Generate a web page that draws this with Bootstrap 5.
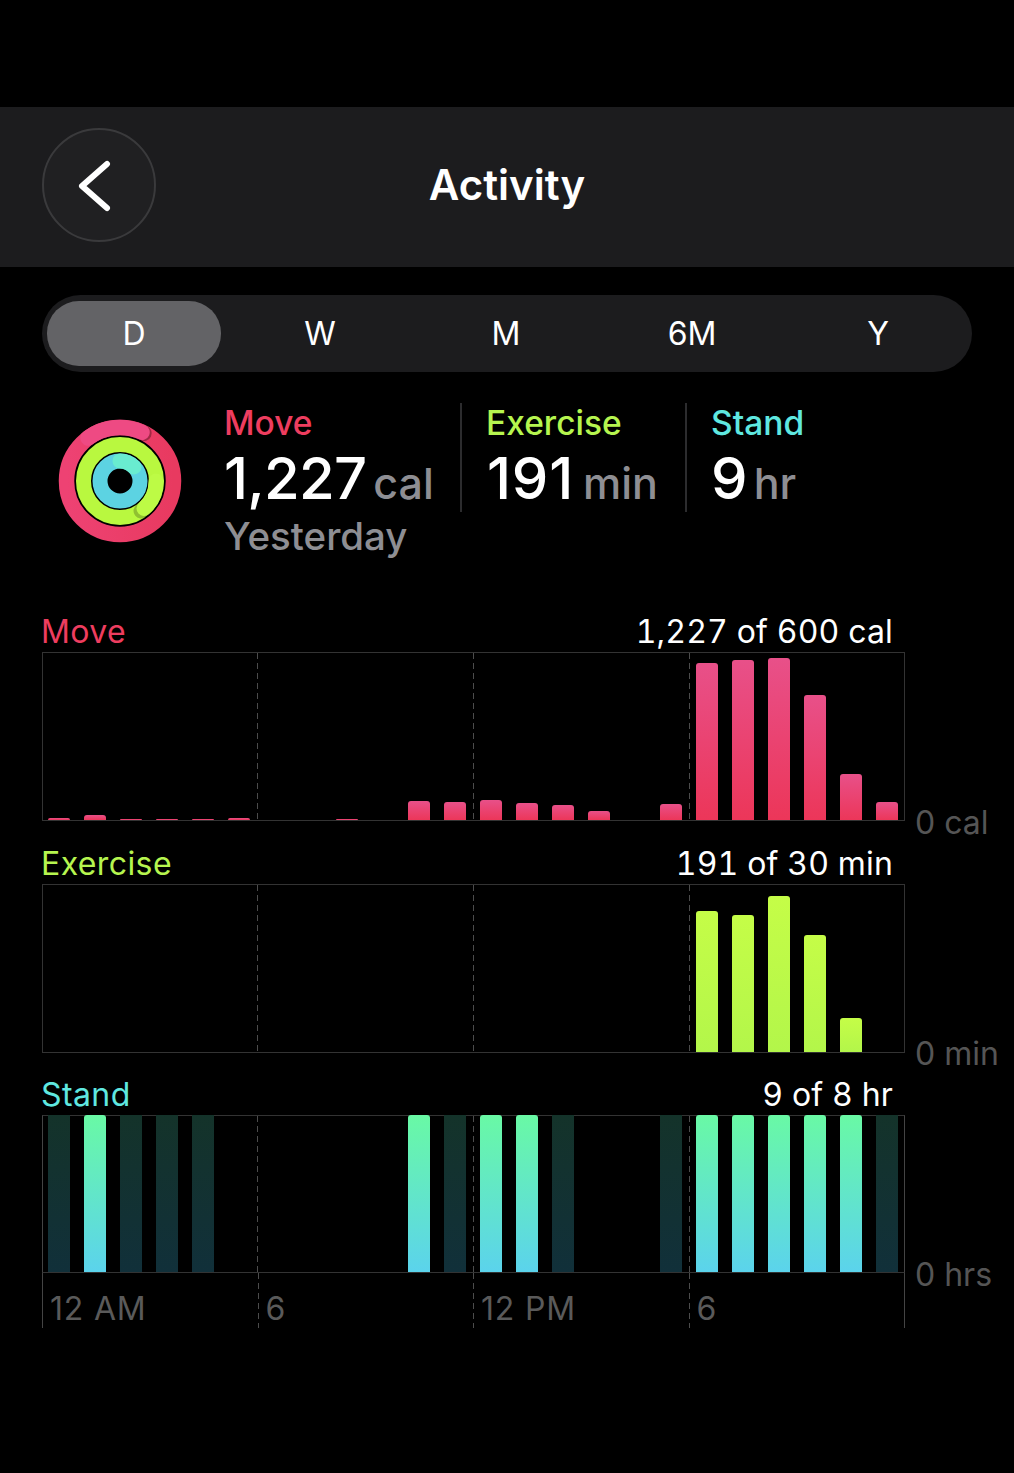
<!DOCTYPE html>
<html lang="en">
<head>
  <meta charset="UTF-8">
  <title>Activity</title>
  <meta name="viewport" content="width=device-width, initial-scale=1.0">
  <link href="https://cdn.jsdelivr.net/npm/bootstrap@5.3.0/dist/css/bootstrap.min.css" rel="stylesheet">
  <style>
    body { background: #000; color: #fff; font-family: Inter, "Liberation Sans", sans-serif; }
    .app-header { margin-top: 107px; height: 160px; background: #1c1c1e; padding: 0 42px; display: grid; grid-template-columns: 1fr auto 1fr; align-items: center; }
    .back-btn { width: 114px; height: 114px; border: 2px solid #3a3a3c; background: #202022; padding: 0; margin-top: -5px; }
    .app-title { font-size: 42px; font-weight: 600; line-height: 1; margin-top: -4px; }

    .range-bar { margin: 28px 42px 0; height: 77px; background: #1c1c1e; }
    .range-item { flex: 0 0 186px; padding: 6px; }
    .range-item:first-child { margin-left: -1px; }
    .range-bar .nav-link { height: 65px; line-height: 65px; padding: 0; color: #fff; font-size: 32px; text-align: center; border-radius: 32px; }
    .range-bar .nav-link.active { background: #636366; color: #fff; }

    .summary { margin: 31px 0 0 58px; }
    .ring-icon { margin-bottom: 3px; }
    .stat-col { margin-left: 42px; }
    .stat { height: 109px; padding-left: 24px; border-left: 2px solid #2c2c2e; }
    .stat:first-child { padding-left: 0; border-left: 0; width: 236px; }
    .stat-ex { width: 225px; }
    .stat-label { font-size: 33.500px; line-height: 40px; font-weight: 500; }
    .stat-value { font-size: 58px; line-height: 71px; font-weight: 500; letter-spacing: -.8px; }
    .stat-unit { font-size: 43px; font-weight: 500; color: #8e8e93; margin-left: 7px; letter-spacing: 0; }
    .stat-wide { letter-spacing: .8px; margin-left: 1px; }
    .stat-wide .stat-unit { margin-left: 9px; }
    .stat-day { font-size: 38.500px; line-height: 49px; font-weight: 500; color: #8e8e93; }
    .c-move { color: #ee3d5f; }
    .c-ex { color: #b6f54f; }
    .c-stand { color: #5fe8e0; }

    .charts { margin: 50px 0 0 42px; }
    .chart-block + .chart-block { margin-top: 22px; }
    .chart-block:last-child { margin-top: 21px; }
    .chart-head { width: 863px; height: 41px; padding-right: 12px; font-size: 32px; line-height: 42px; letter-spacing: .4px; }
    .head-name { margin-left: -1px; }
    .head-val { font-variant-numeric: tabular-nums; letter-spacing: .15px; }
    .plot-row { display: flex; }
    .plot { width: 863px; border: 1px solid #333; padding-left: 5px; gap: 14px; }
    .plot-h168 { height: 169px; }
    .plot-h158 { height: 158px; border-left-color: #444; border-right-color: #444; }
    .guide { top: 0; bottom: 0; width: 1px; background: repeating-linear-gradient(#4c4c4c 0 6px, transparent 6px 10px); }
    .g1 { left: 214px; }
    .g2 { left: 430px; }
    .g3 { left: 646px; }
    .chart-bar { flex: 0 0 22px; position: relative; border-radius: 3px 3px 0 0; }
    .bar-move { background: linear-gradient(#e85089, #ec3659); }
    .bar-ex { background: linear-gradient(#c5fd47, #b3f64a); }
    .bar-on { background: linear-gradient(#69f9a5, #5bd3ec); }
    .bar-off { background: linear-gradient(#14332a, #11303a); border-radius: 0; }
    .axis-unit { align-self: flex-end; margin: 0 0 -22px 10px; font-size: 32px; line-height: 40px; color: #555; white-space: nowrap; }
    .axis-mid { margin-bottom: -21px; }
    .hours { width: 863px; height: 55px; }
    .hour-cell { flex: 1 1 0; border-left: 1px solid transparent; background: repeating-linear-gradient(#4c4c4c 0 6px, transparent 6px 10px) left top / 1px 100% no-repeat border-box; padding: 14px 0 0 7px; font-size: 32px; line-height: 44px; color: #5a5a5a; letter-spacing: .8px; }
    .hour-cell:first-child { border-left-color: #444; background: none; }
    .hour-cell:last-child { border-right: 1px solid #444; }
  </style>
</head>
<body>
  <header class="app-header">
    <div>
      <button class="btn rounded-circle back-btn d-flex align-items-center justify-content-center" aria-label="Back">
        <svg width="42" height="56" viewBox="0 0 42 56" fill="none"><path d="M29 7 4 29l25 22" stroke="#fff" stroke-width="6" stroke-linecap="round" stroke-linejoin="round"/></svg>
      </button>
    </div>
    <div class="app-title">Activity</div>
    <div></div>
  </header>

  <ul class="nav range-bar rounded-pill flex-nowrap">
    <li class="range-item"><a class="nav-link active" href="#">D</a></li>
    <li class="range-item"><a class="nav-link" href="#">W</a></li>
    <li class="range-item"><a class="nav-link" href="#">M</a></li>
    <li class="range-item"><a class="nav-link" href="#">6M</a></li>
    <li class="range-item"><a class="nav-link" href="#">Y</a></li>
  </ul>

  <section class="summary d-flex align-items-center">
    <svg class="ring-icon" width="124" height="124" viewBox="0 0 124 124" fill="none">
      <defs>
        <linearGradient id="ringMove" x1="0" y1="0" x2="1" y2="0"><stop offset="0" stop-color="#ee4273"/><stop offset="1" stop-color="#e83a60"/></linearGradient>
      </defs>
      <circle cx="62" cy="62" r="53.500" stroke="url(#ringMove)" stroke-width="15.500"/>
      <path d="M62 8.500A53.500 53.500 0 0 1 84 13.300" stroke="#000" stroke-opacity=".3" stroke-width="15.500" stroke-linecap="round" transform="translate(2 1)"/>
      <path d="M30 19A53.500 53.500 0 0 1 84 13.300" stroke="#ee4a83" stroke-width="15.500" stroke-linecap="round"/>
      <circle cx="62" cy="62" r="36.500" stroke="#b9f83f" stroke-width="15"/>
      <path d="M98 70A36.500 36.500 0 0 1 85 90" stroke="#000" stroke-opacity=".22" stroke-width="15" stroke-linecap="round" transform="translate(-2 2)"/>
      <path d="M98 62A36.500 36.500 0 0 1 86 89.500" stroke="#bdfb45" stroke-width="15" stroke-linecap="round"/>
      <circle cx="62" cy="62" r="20" stroke="#5cd3e2" stroke-width="15"/>
      <path d="M62 42A20 20 0 0 1 76 48" stroke="#69ecd0" stroke-width="15" stroke-linecap="round"/>
    </svg>
    <div class="stat-col">
      <div class="d-flex">
        <div class="stat">
          <div class="stat-label c-move">Move</div>
          <div class="stat-value">1,227<span class="stat-unit">cal</span></div>
        </div>
        <div class="stat stat-ex">
          <div class="stat-label c-ex">Exercise</div>
          <div class="stat-value stat-wide">191<span class="stat-unit">min</span></div>
        </div>
        <div class="stat">
          <div class="stat-label c-stand">Stand</div>
          <div class="stat-value">9<span class="stat-unit">hr</span></div>
        </div>
      </div>
      <div class="stat-day">Yesterday</div>
    </div>
  </section>

  <main class="charts">
    <div class="chart-block">
      <div class="chart-head d-flex justify-content-between"><span class="head-name c-move">Move</span><span class="head-val">1,227 of 600 cal</span></div>
      <div class="plot-row">
        <div class="plot plot-h168 d-flex align-items-end position-relative" id="plotMove">
          <span class="guide g1 position-absolute"></span><span class="guide g2 position-absolute"></span><span class="guide g3 position-absolute"></span>
        </div>
        <div class="axis-unit">0 cal</div>
      </div>
    </div>
    <div class="chart-block">
      <div class="chart-head d-flex justify-content-between"><span class="head-name c-ex">Exercise</span><span class="head-val">191 of 30 min</span></div>
      <div class="plot-row">
        <div class="plot plot-h168 d-flex align-items-end position-relative" id="plotExercise">
          <span class="guide g1 position-absolute"></span><span class="guide g2 position-absolute"></span><span class="guide g3 position-absolute"></span>
        </div>
        <div class="axis-unit axis-mid">0 min</div>
      </div>
    </div>
    <div class="chart-block">
      <div class="chart-head d-flex justify-content-between"><span class="head-name c-stand">Stand</span><span class="head-val">9 of 8 hr</span></div>
      <div class="plot-row">
        <div class="plot plot-h158 d-flex align-items-end position-relative" id="plotStand">
          <span class="guide g1 position-absolute"></span><span class="guide g2 position-absolute"></span><span class="guide g3 position-absolute"></span>
        </div>
        <div class="axis-unit">0 hrs</div>
      </div>
      <div class="hours d-flex">
        <div class="hour-cell">12 AM</div>
        <div class="hour-cell">6</div>
        <div class="hour-cell">12 PM</div>
        <div class="hour-cell">6</div>
      </div>
    </div>
  </main>

  <script src="https://cdn.jsdelivr.net/npm/bootstrap@5.3.0/dist/js/bootstrap.bundle.min.js"></script>
  <script>
    // hourly values, heights in px
    const moveData = [2, 5, 1, 1, 1, 2, 0, 0, 1, 0, 19, 18, 20, 17, 15, 9, 0, 16, 157, 160, 162, 125, 46, 18];
    const exerciseData = [0, 0, 0, 0, 0, 0, 0, 0, 0, 0, 0, 0, 0, 0, 0, 0, 0, 0, 141, 137, 156, 117, 34, 0];
    // 2 = stood that hour, 1 = partly, 0 = nothing
    const standData = [1, 2, 1, 1, 1, 0, 0, 0, 0, 0, 2, 1, 2, 2, 1, 0, 0, 1, 2, 2, 2, 2, 2, 1];

    function renderBars(id, data, cls) {
      const plot = document.getElementById(id);
      data.forEach((h) => {
        const bar = document.createElement('div');
        bar.className = 'chart-bar ' + cls;
        bar.style.height = h + 'px';
        plot.appendChild(bar);
      });
    }

    renderBars('plotMove', moveData, 'bar-move');
    renderBars('plotExercise', exerciseData, 'bar-ex');

    const plotStand = document.getElementById('plotStand');
    standData.forEach((v) => {
      const bar = document.createElement('div');
      bar.className = 'chart-bar ' + (v === 2 ? 'bar-on' : 'bar-off');
      bar.style.height = v ? '157px' : '0';
      plotStand.appendChild(bar);
    });
  </script>
</body>
</html>
